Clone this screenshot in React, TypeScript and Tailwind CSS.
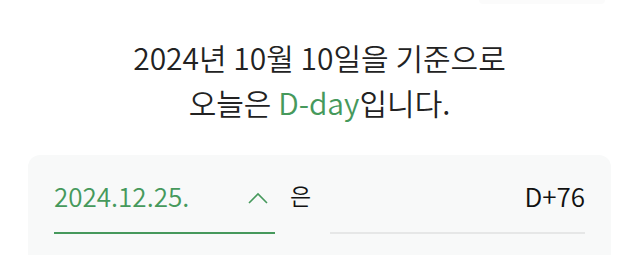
import React from 'react';

const green = '#46995c';

export default function App() {
    return (
        <div
            className="w-[639px] h-[255px] overflow-hidden bg-white text-[#222]"
            style={{ fontFamily: '"Noto Sans CJK KR", "Noto Sans", sans-serif' }}
        >
            <div className="flex justify-end pr-[34px]">
                <div className="w-[126px] h-[4px] rounded-b-md bg-[#fbfbfb]" />
            </div>

            <div className="mt-[31px] text-center text-[30px] leading-[45px] font-[350]">
                <p>2024년 10월 10일을 기준으로</p>
                <p>
                    오늘은 <span className="text-[#46995c]">D-day</span>입니다.
                </p>
            </div>

            <div className="mx-[28px] mt-[30px] h-[140px] rounded-[12px] bg-[#f8f9f9] px-[26px] pt-[22px] font-[350]">
                <div className="flex items-start">
                    <div className="w-[221px] border-b-2 pb-[19px]" style={{ borderColor: green }}>
                        <div className="flex items-center justify-between pr-[7px] h-[36px]">
                            <span className="text-[26px] text-[#46995c]">2024.12.25.</span>
                            <svg className="mt-[6px]" width="20" height="12" viewBox="0 0 20 12" fill="none">
                                <path d="M1 11 L10 2 L19 11" stroke={green} strokeWidth="1.6" />
                            </svg>
                        </div>
                    </div>
                    <span className="ml-[15px] h-[36px] flex items-center text-[23px] text-[#111]">은</span>
                    <div className="ml-[19px] flex-1 border-b-2 border-[#e6e7e7] pb-[19px]">
                        <div className="flex h-[36px] items-center justify-end">
                            <span className="text-[26px] text-[#111]">D+76</span>
                        </div>
                    </div>
                </div>
            </div>
        </div>
    );
}
